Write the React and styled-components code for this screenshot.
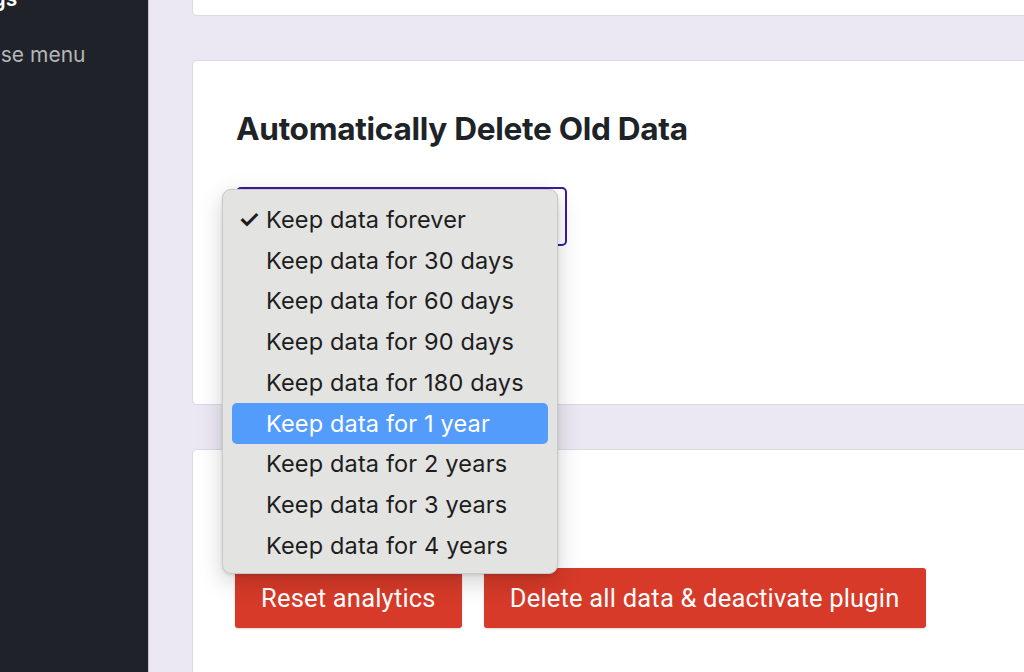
import React from "react";
import styled, { createGlobalStyle } from "styled-components";

const Global = createGlobalStyle`
  html, body { margin: 0; padding: 0; height: 100%; overflow: hidden; }
  body { background: #ebe8f3; font-family: Inter, "Noto Sans", sans-serif; }
  #root { height: 100%; }
`;

const Page = styled.div`
  display: flex;
  height: 672px;
  width: 1024px;
  overflow: hidden;
`;

const Sidebar = styled.nav`
  flex: 0 0 148px;
  background: #1f2229;
  border-right: 1px solid #c9c6d2;
  display: flex;
  flex-direction: column;
  gap: 26px;
  margin-top: -16px;
  overflow: hidden;
`;

const SideItem = styled.div`
  font-family: Inter, sans-serif;
  font-size: 21px;
  line-height: 30px;
  white-space: nowrap;
  margin-left: ${(p) => p.$shift}px;
  color: ${(p) => (p.$active ? "#ffffff" : "#b4b6ba")};
  font-weight: ${(p) => (p.$active ? 600 : 400)};
`;

const Main = styled.main`
  flex: 1;
  display: flex;
  flex-direction: column;
  gap: 44px;
  padding-left: 43px;
  margin-right: -30px;
  margin-top: -100px;
`;

const Card = styled.section`
  position: relative;
  flex-shrink: 0;
  background: #ffffff;
  border: 1px solid #dcd9e3;
  border-radius: 5px;
  box-sizing: border-box;
  height: ${(p) => p.$h}px;
  padding: ${(p) => p.$pad || "0 43px"};
`;

const Heading = styled.h2`
  margin: 0;
  font-family: Inter, sans-serif;
  font-weight: 700;
  font-size: 31.6px;
  line-height: 40px;
  color: #1d2327;
  letter-spacing: -0.3px;
`;

const SelectWrap = styled.div`
  position: relative;
  margin-top: 38px;
  width: 330px;
`;

const SelectBox = styled.div`
  box-sizing: border-box;
  height: 59px;
  width: 331px;
  border: 2px solid #3d1ba0;
  border-radius: 5px;
  background: #fff;
`;

const Menu = styled.ul`
  position: absolute;
  left: -14px;
  top: 2px;
  width: 336px;
  box-sizing: border-box;
  margin: 0;
  padding: 9px 9px 7px;
  list-style: none;
  background: #e3e3e2;
  border: 1px solid #c9c9c8;
  border-radius: 9px;
  box-shadow: 0 8px 24px rgba(0, 0, 0, 0.18), 0 1px 3px rgba(0, 0, 0, 0.12);
  z-index: 10;
`;

const MenuItem = styled.li`
  position: relative;
  height: 40.75px;
  display: flex;
  align-items: center;
  padding-left: 34px;
  border-radius: 5px;
  font-family: Inter, sans-serif;
  font-size: 23.5px;
  letter-spacing: 0.15px;
  white-space: nowrap;
  color: ${(p) => (p.$hl ? "#ffffff" : "#1d1d1d")};
  background: ${(p) => (p.$hl ? "#539cfb" : "transparent")};
`;

const Check = styled.span`
  position: absolute;
  left: 6px;
  font-size: 25px;
  font-weight: 600;
`;

const Buttons = styled.div`
  display: flex;
  gap: 22px;
  margin-left: -1px;
`;

const Danger = styled.button`
  height: 60px;
  padding: 0 26px;
  border: none;
  border-radius: 3px;
  background: #d73a29;
  color: #ffffff;
  font-family: Roboto, sans-serif;
  font-size: 25.5px;
  letter-spacing: 0.2px;
  box-shadow: 0 1px 2px rgba(0, 0, 0, 0.15);
  cursor: pointer;
`;

const options = [
  "Keep data forever",
  "Keep data for 30 days",
  "Keep data for 60 days",
  "Keep data for 90 days",
  "Keep data for 180 days",
  "Keep data for 1 year",
  "Keep data for 2 years",
  "Keep data for 3 years",
  "Keep data for 4 years",
];

export default function App() {
  return (
    <>
      <Global />
      <Page>
        <Sidebar>
          <SideItem $active $shift={-66}>Settings</SideItem>
          <SideItem $shift={-62}>Collapse menu</SideItem>
        </Sidebar>
        <Main>
          <Card $h={116} />
          <Card $h={345} $pad="48px 43px 0">
            <Heading>Automatically Delete Old Data</Heading>
            <SelectWrap>
              <SelectBox />
              <Menu>
                {options.map((o, i) => (
                  <MenuItem key={o} $hl={i === 5}>
                    {i === 0 && <Check>✓</Check>}
                    {o}
                  </MenuItem>
                ))}
              </Menu>
            </SelectWrap>
          </Card>
          <Card $h={300} $pad="118px 43px 0">
            <Buttons>
              <Danger>Reset analytics</Danger>
              <Danger>Delete all data &amp; deactivate plugin</Danger>
            </Buttons>
          </Card>
        </Main>
      </Page>
    </>
  );
}
